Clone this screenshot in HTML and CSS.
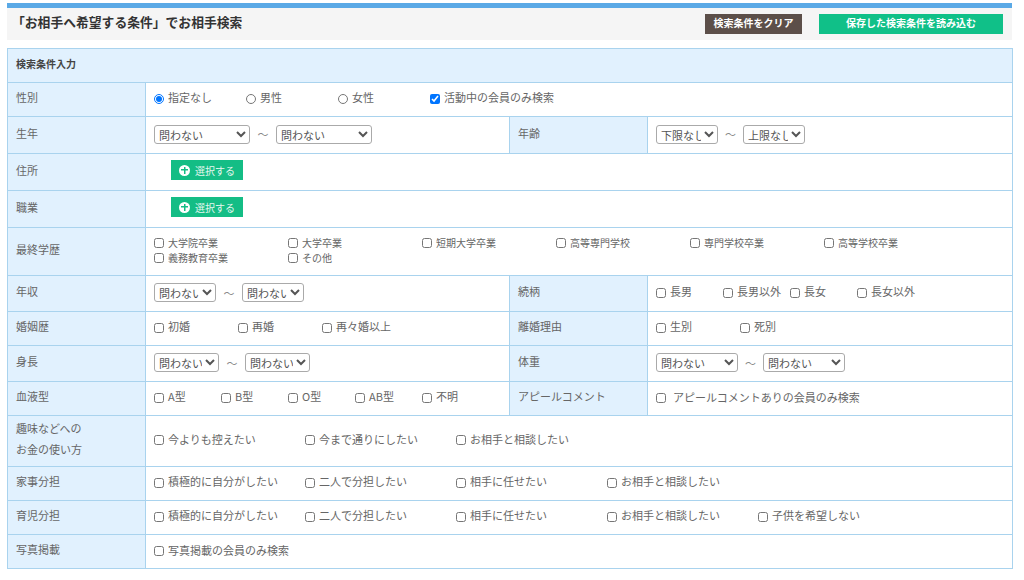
FILE: index.html
```html
<!DOCTYPE html>
<html lang="ja">

<head>
    <meta charset="UTF-8" />
    <title>お相手検索</title>
    <link rel="stylesheet" href="styles.css">
</head>

<body>

    <div class="page">
        <div class="head">
            <h1 class="title">「お相手へ希望する条件」でお相手検索</h1>
            <button class="btn btn-clear" type="button">検索条件をクリア</button>
            <button class="btn btn-load" type="button">保存した検索条件を読み込む</button>
        </div>

        <table class="search">
            <colgroup>
                <col class="col-label">
                <col class="col-main">
                <col class="col-label">
                <col class="col-side">
            </colgroup>
            <tr class="row-sm">
                <th class="caption" colspan="4">検索条件入力</th>
            </tr>
            <tr class="row-sm">
                <th>性別</th>
                <td colspan="3">
                    <div class="opts w92">
                        <label class="opt"><input type="radio" name="sex" checked>指定なし</label>
                        <label class="opt"><input type="radio" name="sex">男性</label>
                        <label class="opt"><input type="radio" name="sex">女性</label>
                        <label class="opt opt-free"><input type="checkbox" checked>活動中の会員のみ検索</label>
                    </div>
                </td>
            </tr>
            <tr class="row-lg">
                <th>生年</th>
                <td>
                    <div class="range range-mid">
                        <select class="sel-96"><option>問わない</option></select>
                        <span class="tilde">～</span>
                        <select class="sel-96"><option>問わない</option></select>
                    </div>
                </td>
                <th>年齢</th>
                <td>
                    <div class="range">
                        <select class="sel-62"><option>下限なし</option></select>
                        <span class="tilde">～</span>
                        <select class="sel-62"><option>上限なし</option></select>
                    </div>
                </td>
            </tr>
            <tr class="row-lg">
                <th>住所</th>
                <td colspan="3"><button class="pick" type="button"><span class="plus"></span>選択する</button></td>
            </tr>
            <tr class="row-lg">
                <th>職業</th>
                <td colspan="3"><button class="pick" type="button"><span class="plus"></span>選択する</button></td>
            </tr>
            <tr class="row-edu">
                <th>最終学歴</th>
                <td colspan="3">
                    <div class="opts w134 small">
                        <label class="opt"><input type="checkbox">大学院卒業</label>
                        <label class="opt"><input type="checkbox">大学卒業</label>
                        <label class="opt"><input type="checkbox">短期大学卒業</label>
                        <label class="opt"><input type="checkbox">高等専門学校</label>
                        <label class="opt"><input type="checkbox">専門学校卒業</label>
                        <label class="opt"><input type="checkbox">高等学校卒業</label>
                        <label class="opt"><input type="checkbox">義務教育卒業</label>
                        <label class="opt"><input type="checkbox">その他</label>
                    </div>
                </td>
            </tr>
            <tr class="row-md">
                <th>年収</th>
                <td>
                    <div class="range range-mid">
                        <select class="sel-62"><option>問わない</option></select>
                        <span class="tilde">～</span>
                        <select class="sel-62"><option>問わない</option></select>
                    </div>
                </td>
                <th>続柄</th>
                <td>
                    <div class="opts w67">
                        <label class="opt"><input type="checkbox">長男</label>
                        <label class="opt"><input type="checkbox">長男以外</label>
                        <label class="opt"><input type="checkbox">長女</label>
                        <label class="opt"><input type="checkbox">長女以外</label>
                    </div>
                </td>
            </tr>
            <tr class="row-sm">
                <th>婚姻歴</th>
                <td>
                    <div class="opts w84">
                        <label class="opt"><input type="checkbox">初婚</label>
                        <label class="opt"><input type="checkbox">再婚</label>
                        <label class="opt"><input type="checkbox">再々婚以上</label>
                    </div>
                </td>
                <th>離婚理由</th>
                <td>
                    <div class="opts w84">
                        <label class="opt"><input type="checkbox">生別</label>
                        <label class="opt"><input type="checkbox">死別</label>
                    </div>
                </td>
            </tr>
            <tr class="row-md">
                <th>身長</th>
                <td>
                    <div class="range range-mid">
                        <select class="sel-65"><option>問わない</option></select>
                        <span class="tilde">～</span>
                        <select class="sel-65"><option>問わない</option></select>
                    </div>
                </td>
                <th>体重</th>
                <td>
                    <div class="range">
                        <select class="sel-82"><option>問わない</option></select>
                        <span class="tilde">～</span>
                        <select class="sel-82"><option>問わない</option></select>
                    </div>
                </td>
            </tr>
            <tr class="row-sm">
                <th>血液型</th>
                <td>
                    <div class="opts w67">
                        <label class="opt"><input type="checkbox">A型</label>
                        <label class="opt"><input type="checkbox">B型</label>
                        <label class="opt"><input type="checkbox">O型</label>
                        <label class="opt"><input type="checkbox">AB型</label>
                        <label class="opt"><input type="checkbox">不明</label>
                    </div>
                </td>
                <th>アピールコメント</th>
                <td>
                    <label class="opt opt-free opt-wide"><input type="checkbox">アピールコメントありの会員のみ検索</label>
                </td>
            </tr>
            <tr class="row-tall">
                <th class="two-line">趣味などへの<br>お金の使い方</th>
                <td colspan="3">
                    <div class="opts w151">
                        <label class="opt"><input type="checkbox">今よりも控えたい</label>
                        <label class="opt"><input type="checkbox">今まで通りにしたい</label>
                        <label class="opt"><input type="checkbox">お相手と相談したい</label>
                    </div>
                </td>
            </tr>
            <tr class="row-sm">
                <th>家事分担</th>
                <td colspan="3">
                    <div class="opts w151">
                        <label class="opt"><input type="checkbox">積極的に自分がしたい</label>
                        <label class="opt"><input type="checkbox">二人で分担したい</label>
                        <label class="opt"><input type="checkbox">相手に任せたい</label>
                        <label class="opt"><input type="checkbox">お相手と相談したい</label>
                    </div>
                </td>
            </tr>
            <tr class="row-sm">
                <th>育児分担</th>
                <td colspan="3">
                    <div class="opts w151">
                        <label class="opt"><input type="checkbox">積極的に自分がしたい</label>
                        <label class="opt"><input type="checkbox">二人で分担したい</label>
                        <label class="opt"><input type="checkbox">相手に任せたい</label>
                        <label class="opt"><input type="checkbox">お相手と相談したい</label>
                        <label class="opt"><input type="checkbox">子供を希望しない</label>
                    </div>
                </td>
            </tr>
            <tr class="row-sm">
                <th>写真掲載</th>
                <td colspan="3">
                    <label class="opt opt-free"><input type="checkbox">写真掲載の会員のみ検索</label>
                </td>
            </tr>
        </table>
    </div>

</body>

</html>
```

FILE: styles.css
```css
html,
body {
    margin: 0;
    background: #fff;
}

body {
    font-family: "Noto Sans CJK JP", "Liberation Sans", sans-serif;
    font-size: 11px;
    color: #666;
}

.page {
    width: 1005px;
    margin: 3px 0 0 7px;
}

/* header bar */
.head {
    display: flex;
    align-items: center;
    height: 32px;
    padding-right: 9px;
    border-top: 5px solid #5aa9e6;
    background: #f5f5f5;
}

.title {
    margin: 0 auto 5px 5px;
    font-size: 12.8px;
    line-height: 20px;
    font-weight: bold;
    color: #333;
}

.btn {
    height: 20px;
    margin-bottom: 1px;
    padding: 0 0 2px;
    border: 0;
    font-family: inherit;
    font-size: 10px;
    font-weight: bold;
    color: #fff;
}

.btn-clear {
    width: 97px;
    background: #5c4f49;
}

.btn-load {
    width: 184px;
    margin-left: 17px;
    background: #10c088;
}

/* search table */
.search {
    width: 1005px;
    margin-top: 8px;
    table-layout: fixed;
    border-collapse: collapse;
    border: 1px solid #b5d8ee;
}

.col-label {
    width: 138px;
}

.col-main {
    width: 364px;
}

.col-side {
    width: 365px;
}

.search th,
.search td {
    box-sizing: border-box;
    padding: 0 8px 4px;
    border: 1px solid #a9d3ee;
    text-align: left;
    font-weight: normal;
}

.search th {
    padding-bottom: 5px;
    background: #e1f1fe;
}

.search th.caption {
    font-weight: bold;
    font-size: 10px;
    color: #444;
}

.search th.two-line {
    line-height: 21px;
}

.row-sm th,
.row-sm td {
    height: 34px;
}

.row-md th,
.row-md td {
    height: 36px;
}

.row-lg th,
.row-lg td {
    height: 37px;
}

.row-edu th,
.row-edu td {
    height: 48px;
}

.row-tall th,
.row-tall td {
    height: 51px;
}

/* options */
.opts {
    display: flex;
    flex-wrap: wrap;
    line-height: 15px;
}

.opt {
    display: flex;
    align-items: center;
    white-space: nowrap;
}

.opt input {
    flex: none;
    width: 10px;
    height: 10px;
    margin: 2px 4px 0 0;
}

.opt-wide input {
    margin-right: 7px;
}

.small {
    font-size: 10px;
}

.w67 .opt {
    width: 67px;
}

.w84 .opt {
    width: 84px;
}

.w92 .opt {
    width: 92px;
}

.w134 .opt {
    width: 134px;
}

.w151 .opt {
    width: 151px;
}

.opts .opt-free {
    width: auto;
}

/* year / height selects */
.range {
    display: flex;
    align-items: center;
    margin-top: 2px;
}

.range select {
    height: 19px;
    padding: 0;
    border: 1px solid #aaa;
    border-radius: 3px;
    background: #fff;
    font-family: inherit;
    font-size: 11px;
    color: #555;
}

.tilde {
    margin: 0 7px;
    color: #888;
}

.range-mid .tilde {
    margin: 0 7.5px;
}

.sel-62 {
    width: 62px;
}

.sel-65 {
    width: 65px;
}

.sel-82 {
    width: 82px;
}

.sel-96 {
    width: 96px;
}

/* green select button */
.pick {
    display: flex;
    align-items: center;
    width: 72px;
    height: 20px;
    margin: 0 0 0 17px;
    padding: 0 0 0 8px;
    border: 0;
    background: #14bd85;
    font-family: inherit;
    font-size: 10px;
    color: #e4f7ef;
}

.plus {
    width: 11px;
    height: 11px;
    margin-right: 5px;
    border-radius: 50%;
    background:
        linear-gradient(#14bd85, #14bd85) center / 7px 1.5px no-repeat,
        linear-gradient(#14bd85, #14bd85) center / 1.5px 7px no-repeat,
        #fff;
}
```
